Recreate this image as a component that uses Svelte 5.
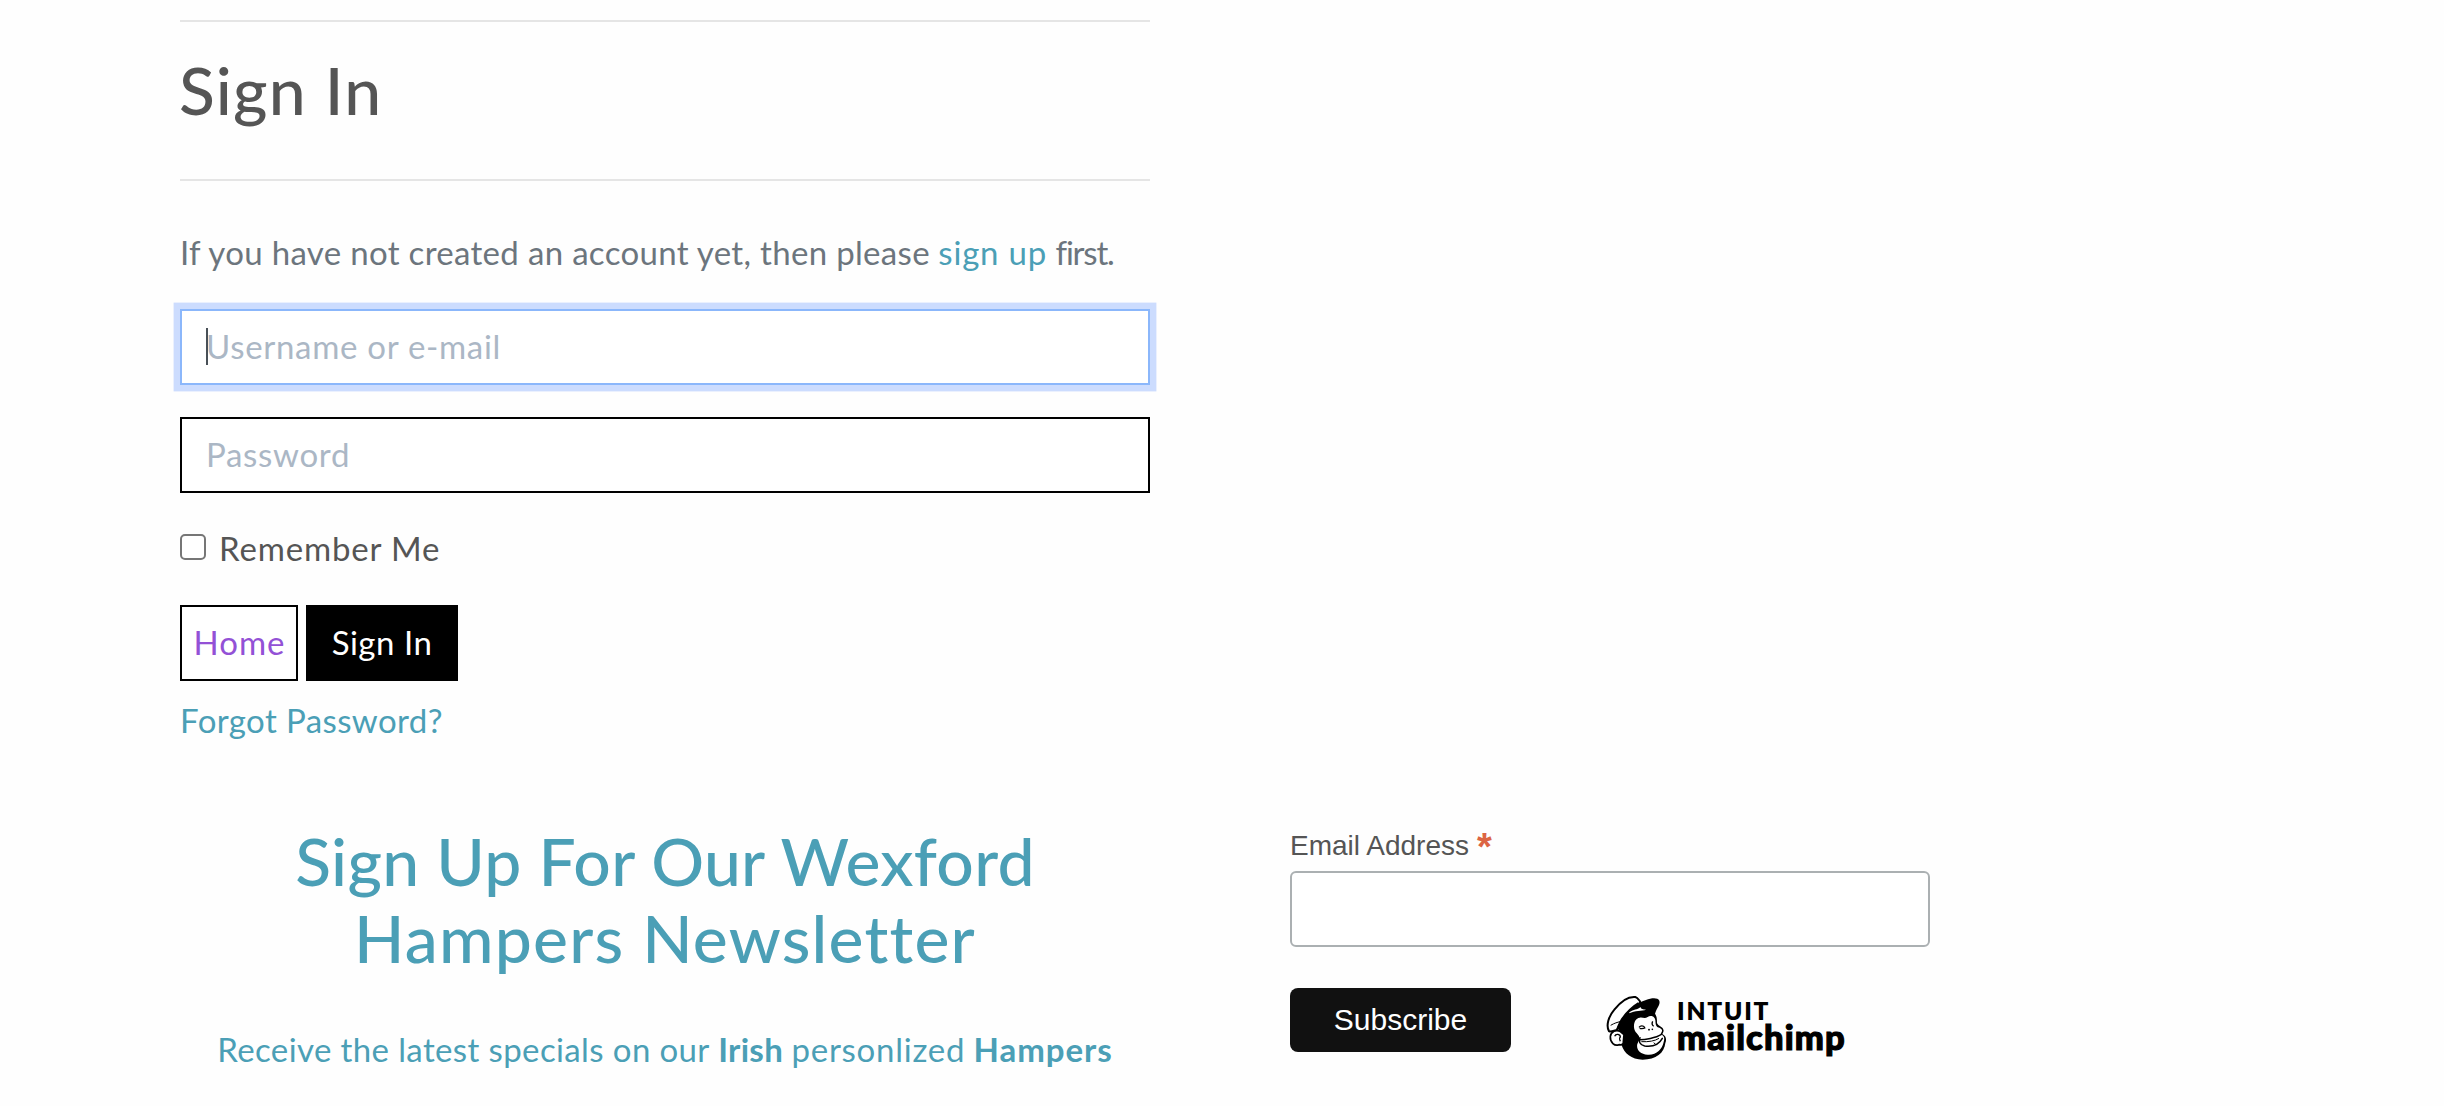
<script>
  let remember = $state(false);
</script>

<main>
  <section class="signin">
    <hr />
    <h1>Sign In</h1>
    <hr />
    <p class="intro"><span class="lead">If you have not created an account yet, then please</span> <a class="signup" href="#signup">sign up</a> <span class="first">first.</span></p>
    <form>
      <div class="field focused">
        <span class="caret"></span>
        <input type="text" placeholder="Username or e-mail" aria-label="Username or e-mail" />
      </div>
      <div class="field">
        <input type="password" placeholder="Password" aria-label="Password" />
      </div>
      <label class="remember">
        <input type="checkbox" bind:checked={remember} />
        <span>Remember Me</span>
      </label>
      <div class="actions">
        <a class="home" href="#home"><span>Home</span></a>
        <button type="button"><span>Sign In</span></button>
      </div>
      <a class="forgot" href="#forgot">Forgot Password?</a>
    </form>
  </section>

  <section class="newsletter">
    <div class="pitch">
      <h2><span class="line-a">Sign Up For Our Wexford</span><span class="line-b">Hampers Newsletter</span></h2>
      <p><span class="w1">Receive the latest specials on our</span> <b class="w2">Irish</b> <span class="w3">personlized</span> <b class="w4">Hampers</b></p>
    </div>
    <form class="subscribe">
      <label for="email">Email Address <span class="star">*</span></label>
      <input id="email" type="email" />
      <div class="row">
        <button type="button">Subscribe</button>
        <a class="brand" href="#mailchimp" aria-label="Intuit Mailchimp">
          <svg viewBox="0 0 240 240" width="80" height="80" aria-hidden="true">
            <!-- head -->
            <path d="M62 108 C70 92 92 84 105 80 L160 82 C170 88 171 100 171 114 C174 124 190 124 191 137 C190 142 188 144 187 147 C199 153 200 164 196 174 C193 204 168 224 128 224 C94 224 72 204 65 181 C54 160 56 126 62 108Z" />
            <!-- cap crown -->
            <path d="M27 139 C17 121 26 94 43 74 C61 51 85 34 106 36 C113 38 115 43 120 49 L118 62 C94 76 67 98 50 135 C42 137 34 140 27 139Z" fill="#fff" stroke="#000" stroke-width="6" stroke-linejoin="round" />
            <path d="M32 121 C44 114 52 112 60 110" fill="none" stroke="#000" stroke-width="3" />
            <path d="M50 130 C60 96 88 68 114 52 L126 65 L96 98 L65 141Z" />
            <!-- brim -->
            <path d="M90 83 C99 63 115 52 138 45 C154 39 173 37 178 47 C182 60 169 69 165 87 C142 83 118 88 93 97Z" />
            <path d="M88 82 C102 71 110 76 122 66 C122 72 130 73 138 74 C126 78 104 76 88 85Z" fill="#fff" />
            <!-- face -->
            <path d="M102 127 C101 112 107 100 119 98 C128 96 134 102 143 96 C151 90 164 93 166 105 C167 114 166 119 171 125 C177 129 187 129 186 138 C185 144 180 146 183 149 C194 151 194 162 191 171 C187 193 168 211 143 209 C120 208 108 193 112 177 C117 167 120 163 117 154 C111 143 103 141 102 127Z" fill="#fff" />
            <!-- eyes and nose -->
            <path d="M117 127 C122 121 130 122 134 127 M119 130 C125 132 131 131 136 128 M158 109 C155 115 157 121 161 124" fill="none" stroke="#000" stroke-width="4" />
            <circle cx="147" cy="134" r="2.8" />
            <circle cx="157" cy="133" r="2.5" />
            <!-- mouth -->
            <path d="M119 164 C134 164 168 159 183 149 M120 158 C115 168 119 180 134 183 C158 186 178 177 187 160" fill="none" stroke="#000" stroke-width="4.5" stroke-linecap="round" />
            <path d="M124 170 C146 171 165 168 177 160 M161 173 L168 179" fill="none" stroke="#000" stroke-width="3" />
            <!-- ear -->
            <path d="M61 140 C49 132 32 140 31 155 C30 172 44 185 57 179 C67 181 71 176 70 170 L72 149Z" fill="#fff" stroke="#000" stroke-width="5" />
            <path d="M44 154 C48 144 61 148 61 156 C58 159 57 159 61 169" fill="none" stroke="#000" stroke-width="4" />
          </svg>
          <span class="wordmark"><span class="intuit">INTUIT</span><span class="mailchimp">mailchimp</span></span>
        </a>
      </div>
    </form>
  </section>
</main>

<style>
  :global(body) { margin: 0; background: #fefefe; }
  main { height: 1106px; overflow: hidden; box-sizing: border-box; padding: 20px 0 0 180px; font: 33px/48px Lato, sans-serif; color: #555; }
  .signin { width: 970px; }
  hr { height: 2px; margin: 0; border: 0; background: #e5e5e5; }
  h1, h2 { margin: 0; font-size: 66px; line-height: 77px; font-weight: 500; }
  h1 { margin: 29px 0 51px; letter-spacing: 1.2px; text-indent: -1px; }
  a { color: #4b9fb6; text-decoration: none; }
  .intro { margin: 47px 0 33px; color: #6c757d; white-space: nowrap; }
  .lead { letter-spacing: 0.32px; }
  .signup { letter-spacing: 0.8px; }
  .first { letter-spacing: -1.2px; }
  .field { position: relative; height: 76px; box-sizing: border-box; border: 2px solid #000; background: #fff; margin-bottom: 32px; }
  .field + .field { margin-bottom: 31px; }
  .focused { border-color: #8bb7fb; box-shadow: 0 0 0 6.4px #ccdcfe; }
  .field input { display: block; box-sizing: border-box; width: 100%; height: 72px; padding: 0 24px 3px; border: 0; outline: 0; background: transparent; font: inherit; color: #495057; letter-spacing: 0.7px; }
  .field input::placeholder { color: #abb7c5; opacity: 1; }
  .caret { position: absolute; left: 24px; top: 17px; width: 2px; height: 37px; background: #495057; }
  .remember { display: flex; align-items: center; height: 48px; gap: 13px; margin-bottom: 33px; letter-spacing: 0.85px; }
  .remember input { appearance: none; width: 26px; height: 26px; margin: 0 0 2px; box-sizing: border-box; border: 2px solid #767676; border-radius: 5px; background: #fff; }
  .actions { display: flex; gap: 8px; margin-bottom: 15px; }
  .home, .actions button { box-sizing: border-box; height: 76px; border: 2px solid #000; padding: 0 0 3px; display: flex; align-items: center; justify-content: center; font: inherit; }
  .home { width: 118px; padding-left: 1px; color: #9351d6; letter-spacing: 1px; background: #fff; }
  .actions button { width: 152px; background: #000; color: #fff; letter-spacing: 0.5px; }
  .forgot { display: block; letter-spacing: 0.4px; }
  .newsletter { display: grid; grid-template-columns: 970px 640px; column-gap: 140px; margin-top: 78px; }
  .pitch { color: #4b9fb6; text-align: center; }
  h2 span { display: block; }
  .line-a { letter-spacing: 0.28px; }
  .line-b { letter-spacing: 1.2px; }
  .pitch p { margin: 49px 0 0; white-space: nowrap; }
  .w1 { letter-spacing: 0.38px; }
  .w2 { letter-spacing: 0.3px; }
  .w3 { letter-spacing: 0.74px; }
  .w4 { letter-spacing: 0.95px; }
  .subscribe { font-family: "Liberation Sans", Arial, sans-serif; padding-top: 7px; }
  .subscribe label { display: flex; gap: 8px; height: 32px; line-height: 33px; font-size: 28px; margin-bottom: 10px; }
  .star { color: #dc6543; font-size: 38px; font-weight: 700; line-height: 37px; }
  .subscribe input { display: block; width: 100%; height: 76px; box-sizing: border-box; border: 2px solid #abb0b2; border-radius: 6px; background: #fff; padding: 0 16px; outline: 0; font: inherit; }
  .row { display: flex; margin-top: 41px; }
  .row button { width: 221px; height: 64px; border: 0; border-radius: 8px; background: #111; color: #fff; font: 30px/64px "Liberation Sans", Arial, sans-serif; padding: 0; }
  .brand { display: flex; margin: -3px 0 0 89px; color: #000; font-family: Lato, sans-serif; }
  .wordmark { display: flex; flex-direction: column; padding-top: 15px; margin-left: -3px; }
  .intuit { font-size: 24.5px; line-height: 22px; font-weight: 800; letter-spacing: 1.8px; }
  .mailchimp { font-size: 34.5px; line-height: 29px; font-weight: 900; letter-spacing: 1.15px; -webkit-text-stroke: 1.2px #000; }
</style>
